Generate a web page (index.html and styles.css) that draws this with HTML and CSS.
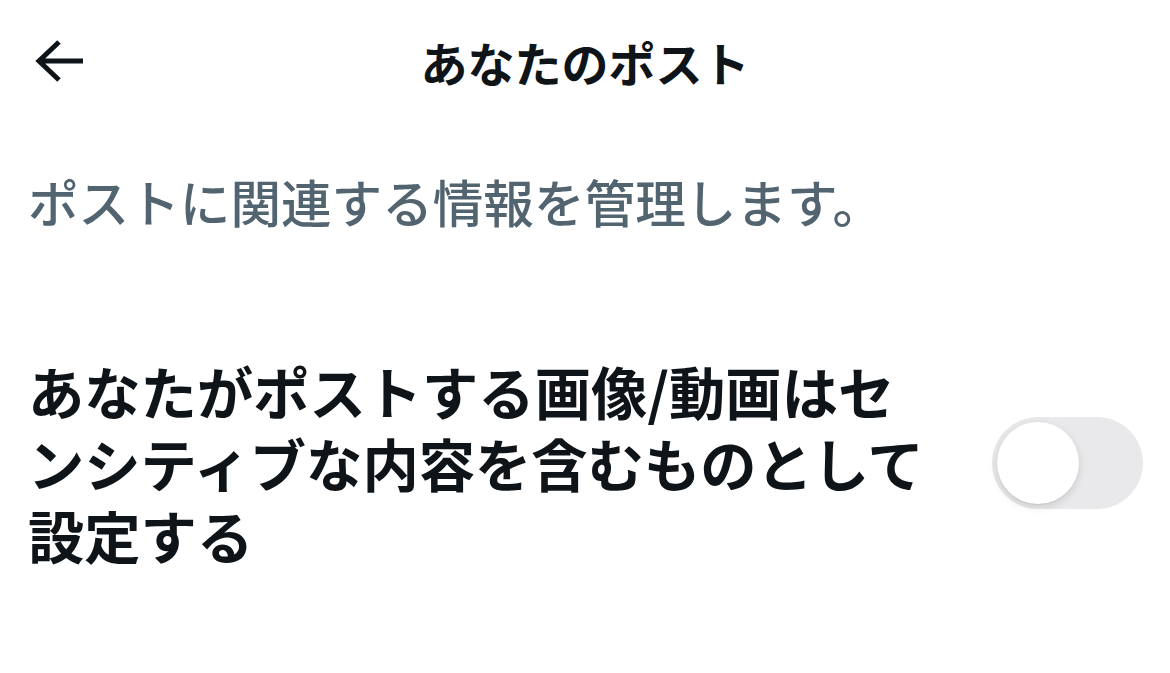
FILE: index.html
```html
<!DOCTYPE html>
<html lang="ja">
<head>
<meta charset="utf-8">
<title>あなたのポスト</title>
<link rel="stylesheet" href="styles.css">
</head>
<body>
  <div class="screen">
    <header class="topbar">
      <button class="back" aria-label="戻る">
        <svg viewBox="0 0 52 44" width="52" height="44">
          <path d="M49 21H5M25 2L5 21l20 19" fill="none" stroke="#0f1419" stroke-width="5" stroke-linecap="butt" stroke-linejoin="miter"/>
        </svg>
      </button>
      <h1 class="title">あなたのポスト</h1>
    </header>

    <p class="lead">ポストに関連する情報を管理します。</p>

    <section class="setting">
      <p class="setting-label">あなたがポストする画像/動画はセンシティブな内容を含むものとして設定する</p>
      <div class="switch" role="switch" aria-checked="false">
        <span class="knob"></span>
      </div>
    </section>
  </div>
</body>
</html>
```

FILE: styles.css
```css
html, body {
  margin: 0;
  padding: 0;
  background: #ffffff;
}

body {
  font-family: "Noto Sans CJK JP", "Noto Sans", sans-serif;
  color: #0f1419;
}

.screen {
  width: 1170px;
  height: 673px;
  overflow: hidden;
}

.topbar {
  display: flex;
  align-items: center;
  height: 124px;
  padding: 0 0 0 34px;
}

.back {
  display: flex;
  align-items: center;
  justify-content: center;
  width: 52px;
  height: 44px;
  padding: 0;
  border: 0;
  background: none;
}

.title {
  flex: 1;
  margin: 0;
  font-size: 47px;
  line-height: 56px;
  font-weight: 700;
  text-align: center;
  padding-right: 86px;
}

.lead {
  margin: 47px 0 0;
  padding-left: 28px;
  font-size: 50.6px;
  line-height: 60px;
  font-weight: 500;
  color: #536471;
}

.setting {
  display: flex;
  align-items: center;
  justify-content: space-between;
  margin-top: 124px;
  padding: 0 27px 0 28px;
}

.setting-label {
  width: 912px;
  margin: 0;
  font-size: 56.3px;
  line-height: 72px;
  font-weight: 700;
}

.switch {
  display: flex;
  align-items: center;
  box-sizing: border-box;
  width: 151px;
  height: 92px;
  padding: 0 5px;
  border-radius: 46px;
  background: #e9e9eb;
}

.knob {
  width: 82px;
  height: 82px;
  border-radius: 50%;
  background: #ffffff;
  box-shadow: 0 3px 8px rgba(0, 0, 0, 0.13), 0 1px 1px rgba(0, 0, 0, 0.06);
}
```
